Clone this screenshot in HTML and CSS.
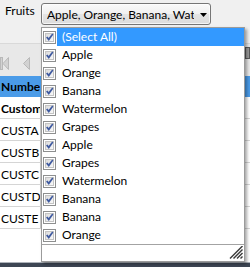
FILE: index.html
```html
<!DOCTYPE html>
<html>
<head>
<meta charset="utf-8">
<link rel="stylesheet" href="styles.css">
</head>
<body>
<svg class="defs" width="0" height="0" aria-hidden="true">
  <defs>
    <linearGradient id="cbg" x1="0" y1="0" x2="1" y2="1">
      <stop offset="0" stop-color="#d9d9d9"/>
      <stop offset="1" stop-color="#fbfbfb"/>
    </linearGradient>
    <symbol id="cb" viewBox="0 0 13 13">
      <rect x="0.5" y="0.5" width="12" height="12" fill="#fff" stroke="#8e8f8f"/>
      <rect x="2.5" y="2.5" width="8" height="8" fill="url(#cbg)" stroke="#c4c4c4"/>
      <path d="M3 6.6 L4.6 5.4 L5.6 7 L9.2 2.6 L10.4 3.6 L5.8 10 Z" fill="#3f5aa0"/>
    </symbol>
  </defs>
</svg>

<div class="toolbar">
  <span class="label">Fruits</span>
  <div class="combo">
    <span class="combo-text">Apple, Orange, Banana, Watermelon, Grapes, Apple, Grapes</span>
    <svg class="combo-arrow" width="7" height="4" viewBox="0 0 7 4"><polygon points="0,0 7,0 3.5,4" fill="#000"/></svg>
  </div>
</div>

<div class="pager">
  <svg class="pg-icon" width="9" height="13" viewBox="0 0 9 13">
    <rect x="0.5" y="0.5" width="2" height="12" fill="#d2d2d2" stroke="#b9b9b9"/>
    <polygon points="8.5,0.5 3,6.5 8.5,12.5" fill="#d2d2d2" stroke="#b9b9b9"/>
  </svg>
  <svg class="pg-icon pg-prev" width="8" height="13" viewBox="0 0 8 13">
    <polygon points="7.5,0.5 1.5,6.5 7.5,12.5" fill="#d2d2d2" stroke="#b9b9b9"/>
  </svg>
  <span class="pg-box"></span>
</div>

<div class="grid">
  <div class="row head"><div class="cell">Number</div><div class="rest"></div></div>
  <div class="row bold"><div class="cell">Customer</div><div class="rest"></div></div>
  <div class="row"><div class="cell">CUSTA</div><div class="rest"></div></div>
  <div class="row"><div class="cell">CUSTB</div><div class="rest"></div></div>
  <div class="row"><div class="cell">CUSTC</div><div class="rest"></div></div>
  <div class="row"><div class="cell">CUSTD</div><div class="rest"></div></div>
  <div class="row"><div class="cell">CUSTE</div><div class="rest"></div></div>
  <div class="fill"><div class="cell"></div></div>
</div>
<div class="bottombar"></div>

<div class="popup">
  <div class="list">
    <div class="item sel"><svg class="cb"><use href="#cb"/></svg><span class="text">(Select All)</span></div>
    <div class="item"><svg class="cb"><use href="#cb"/></svg><span class="text">Apple</span></div>
    <div class="item"><svg class="cb"><use href="#cb"/></svg><span class="text">Orange</span></div>
    <div class="item"><svg class="cb"><use href="#cb"/></svg><span class="text">Banana</span></div>
    <div class="item"><svg class="cb"><use href="#cb"/></svg><span class="text">Watermelon</span></div>
    <div class="item"><svg class="cb"><use href="#cb"/></svg><span class="text">Grapes</span></div>
    <div class="item"><svg class="cb"><use href="#cb"/></svg><span class="text">Apple</span></div>
    <div class="item"><svg class="cb"><use href="#cb"/></svg><span class="text">Grapes</span></div>
    <div class="item"><svg class="cb"><use href="#cb"/></svg><span class="text">Watermelon</span></div>
    <div class="item"><svg class="cb"><use href="#cb"/></svg><span class="text">Banana</span></div>
    <div class="item"><svg class="cb"><use href="#cb"/></svg><span class="text">Banana</span></div>
    <div class="item"><svg class="cb"><use href="#cb"/></svg><span class="text">Orange</span></div>
  </div>
  <div class="footer">
    <svg class="grip" width="14" height="13" viewBox="0 0 14 13">
      <g stroke="#3a3a3a" stroke-width="1.4">
        <line x1="1" y1="12.5" x2="13.5" y2="0"/>
        <line x1="4.5" y1="12.5" x2="13.5" y2="3.5"/>
        <line x1="8" y1="12.5" x2="13.5" y2="7"/>
        <line x1="11.5" y1="12.5" x2="13.5" y2="10.5"/>
      </g>
    </svg>
  </div>
</div>
</body>
</html>
```

FILE: styles.css
```css
html, body {
  margin: 0;
  padding: 0;
}
body {
  width: 250px;
  height: 267px;
  overflow: hidden;
  position: relative;
  background: #f0f0f0;
  font-family: Lato, "Liberation Sans", sans-serif;
  font-size: 12px;
  color: #000;
  display: flex;
  flex-direction: column;
}
.defs {
  flex: none;
  overflow: hidden;
}

/* top toolbar */
.toolbar {
  flex: none;
  height: 44px;
  box-sizing: border-box;
  display: flex;
  align-items: flex-start;
  padding: 3px 0 0 5px;
  border-bottom: 1px solid #d9d9d9;
}
.label {
  width: 36px;
  margin-top: 1px;
  line-height: 14px;
}
.combo {
  width: 170px;
  height: 22px;
  box-sizing: border-box;
  border: 1px solid #767676;
  border-radius: 3px;
  background: linear-gradient(#fafafa, #f0f0f0 50%, #e4e4e4 50%, #dcdcdc);
  box-shadow: inset 0 0 0 1px rgba(255,255,255,0.7);
  display: flex;
  align-items: center;
  padding-left: 5px;
}
.combo-text {
  flex: 1;
  overflow: hidden;
  white-space: nowrap;
  line-height: 14px;
  margin-top: 1px;
}
.combo-arrow {
  flex: none;
  margin: 1px 3px 0 6px;
}

/* pager */
.pager {
  flex: none;
  height: 32px;
  box-sizing: border-box;
  background: #e8e8e8;
  display: flex;
  align-items: flex-start;
  padding-top: 13px;
}
.pg-icon {
  flex: none;
}
.pg-prev {
  margin-left: 13px;
}
.pg-box {
  margin-left: auto;
  margin-top: -10px;
  width: 3px;
  height: 10px;
  border: 1px solid #5a5a5a;
  background: #9a9a9a;
}

/* grid */
.grid {
  flex: 1;
  background: #fff;
  display: flex;
  flex-direction: column;
}
.row {
  flex: none;
  display: flex;
  height: 22px;
  box-sizing: border-box;
  border-bottom: 1px solid #d5d5d5;
}
.row .cell {
  width: 41px;
  box-sizing: border-box;
  border-right: 1px solid #c9c9c9;
  padding: 2px 0 0 1px;
  line-height: 19px;
  white-space: nowrap;
  overflow: hidden;
}
.rest {
  flex: 1;
}
.row.head {
  height: 21px;
  background: #4a9be8;
  border-bottom: 1px solid #4a9be8;
  font-weight: bold;
}
.row.head .cell {
  padding-top: 0;
  line-height: 21px;
  border-right-color: #4a9be8;
}
.row.bold {
  font-weight: bold;
}
.fill {
  flex: 1;
  display: flex;
}
.fill .cell {
  width: 41px;
}
.bottombar {
  flex: none;
  height: 5px;
  box-sizing: border-box;
  border-top: 1px solid #aeb3ba;
  background: #3d4654;
}

/* dropdown popup */
.popup {
  position: absolute;
  left: 41px;
  top: 27px;
  width: 204px;
  height: 235px;
  box-sizing: border-box;
  border: 1px solid #9b9b9b;
  background: #fff;
  box-shadow: 2px 2px 3px rgba(0,0,0,0.35);
  display: flex;
  flex-direction: column;
}
.list {
  flex: none;
  display: flex;
  flex-direction: column;
}
.item {
  display: flex;
  align-items: center;
  height: 18px;
}
.cb {
  flex: none;
  width: 13px;
  height: 13px;
  margin: 0 1px;
}
.text {
  flex: 1;
  height: 18px;
  line-height: 18px;
  padding-left: 5px;
  white-space: nowrap;
}
.item.sel .text {
  background: #3399ff;
  color: #fff;
}
.footer {
  flex: 1;
  border-top: 1px solid #a3a3a3;
  display: flex;
  justify-content: flex-end;
  align-items: flex-end;
  padding: 0 1px 2px 0;
}
.grip {
  flex: none;
}
```
